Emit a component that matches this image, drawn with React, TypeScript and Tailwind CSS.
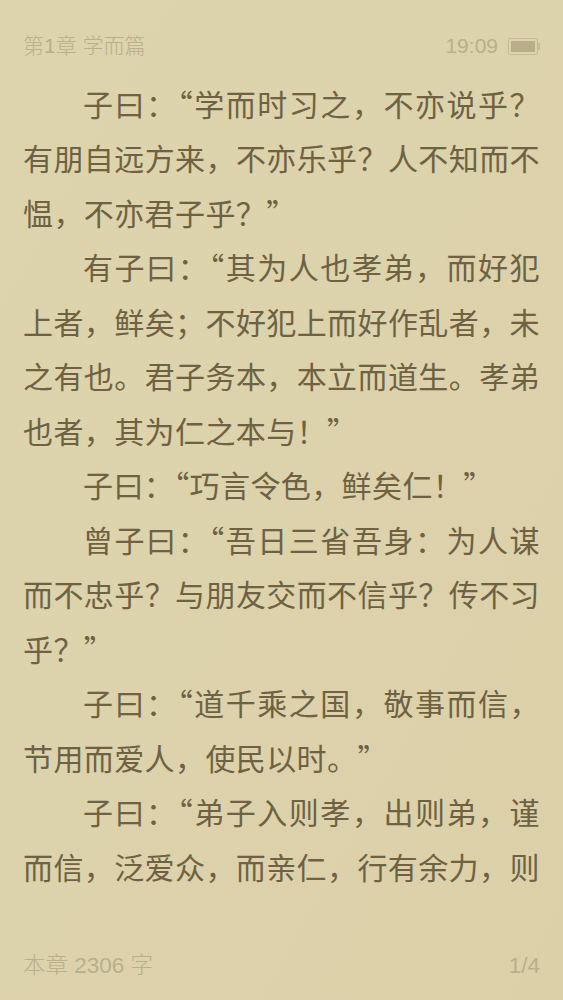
const paragraphs = [
  '子曰：“学而时习之，不亦说乎？有朋自远方来，不亦乐乎？人不知而不愠，不亦君子乎？”',
  '有子曰：“其为人也孝弟，而好犯上者，鲜矣；不好犯上而好作乱者，未之有也。君子务本，本立而道生。孝弟也者，其为仁之本与！”',
  '子曰：“巧言令色，鲜矣仁！”',
  '曾子曰：“吾日三省吾身：为人谋而不忠乎？与朋友交而不信乎？传不习乎？”',
];

function Battery() {
  return (
    <div className="flex items-center">
      <div className="w-[30px] h-[17px] border border-[#c6bc98] p-[2px] rounded-[2px]">
        <div className="w-full h-full bg-[#b9ae89]" />
      </div>
      <div className="w-[2px] h-[7px] bg-[#c6bc98]" />
    </div>
  );
}

export default function App() {
  return (
    <div className="w-[563px] h-[1000px] overflow-hidden flex flex-col bg-gradient-to-br from-[#ddd4ad] to-[#dcd0a9] px-[23px] font-['Liberation_Sans','Noto_Sans_CJK_SC',sans-serif]">
      <div className="flex items-center justify-between h-[24px] mt-[34px] text-[21px] text-[#b9af8b]">
        <span className="font-light">第1章 学而篇</span>
        <div className="flex items-center gap-[10px]">
          <span>19:09</span>
          <Battery />
        </div>
      </div>

      <div className="flex-1 mt-[17.5px] overflow-hidden font-['Noto_Sans_CJK_SC',sans-serif] font-normal text-[30px] leading-[54.5px] tracking-[0.4px] text-[#6e6243]">
        {paragraphs.map((text, i) => (
          <p key={i} className="indent-[60px] text-justify">
            {text}
          </p>
        ))}
        <p className="indent-[60px] text-justify">
          <span>子曰：“道千乘之国，敬事而信，</span>
          <span className="[text-spacing-trim:space-all]">节用而爱人，使民以时。”</span>
        </p>
        <p className="indent-[60px] text-justify">子曰：“弟子入则孝，出则弟，谨而信，泛爱众，而亲仁，行有余力，则</p>
      </div>

      <div className="flex items-center justify-between h-[26px] mb-[21px] text-[22.5px] text-[#b9af8b]">
        <span className="font-light">本章 2306 字</span>
        <span>1/4</span>
      </div>
    </div>
  );
}
